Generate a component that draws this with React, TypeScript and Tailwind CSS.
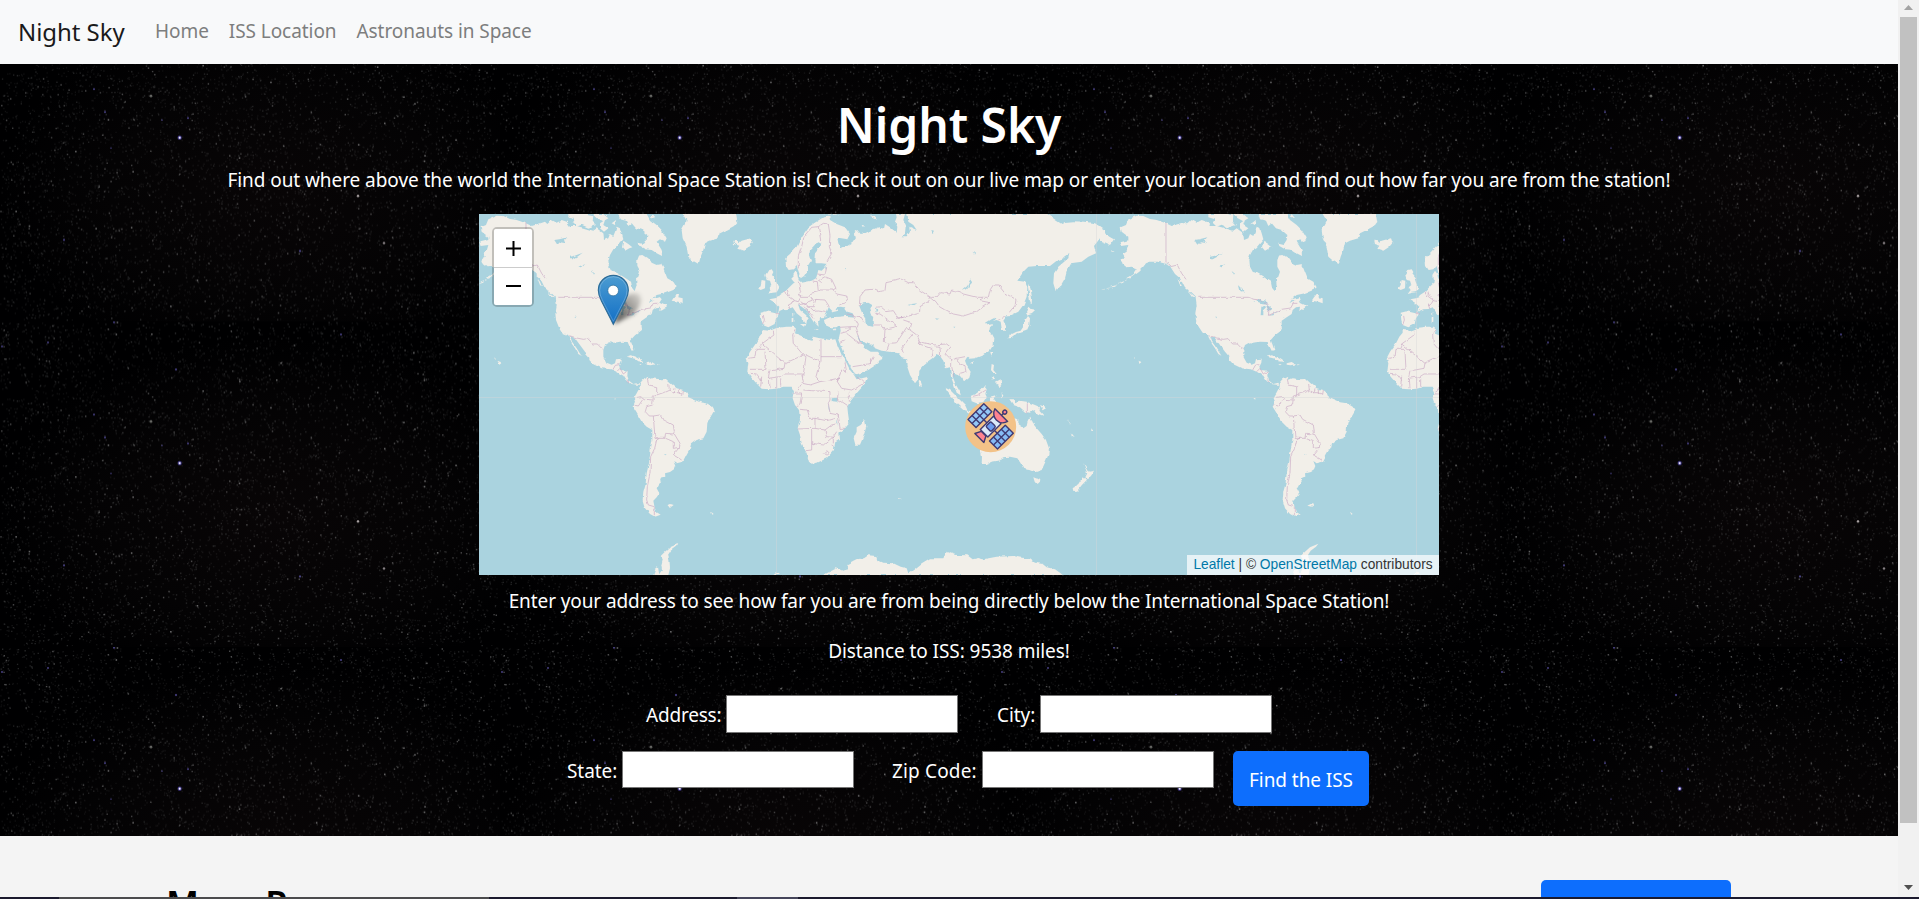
import React from "react";

/* ---------- star field ---------- */
const TILE_W = 500;
const TILE_H = 325.5;

function seeded(seed: number) {
  let a = seed;
  return () => {
    a = (a + 0x6d2b79f5) | 0;
    let t = Math.imul(a ^ (a >>> 15), 1 | a);
    t = (t + Math.imul(t ^ (t >>> 7), 61 | t)) ^ t;
    return ((t ^ (t >>> 14)) >>> 0) / 4294967296;
  };
}

function starPath(seed: number, count: number, size: number) {
  const rnd = seeded(seed);
  let d = "";
  for (let i = 0; i < count; i++) {
    const x = (rnd() * (TILE_W - 2)).toFixed(1);
    const y = (rnd() * (TILE_H - 2)).toFixed(1);
    d += `M${x} ${y}h${size}v${size}h-${size}z`;
  }
  return d;
}

const STAR_LAYERS = [
  { d: starPath(11, 5200, 1.2), fill: "#ffffff", opacity: 0.07 },
  { d: starPath(23, 1500, 1.3), fill: "#e8f0f0", opacity: 0.16 },
  { d: starPath(37, 300, 1.4), fill: "#ffffff", opacity: 0.28 },
  { d: starPath(41, 30, 1.5), fill: "#ffffff", opacity: 0.42 },
];

const BLUE_STARS: [number, number, number][] = [
  [94, 93, 1], [105, 116, 1], [162, 124, 0.8], [188, 122, 1], [111, 152, 0.8], [64, 244, 1],
  [300, 255, 1.1], [114, 0.8, 1], [48, 21, 1], [2, 25, 1], [341, 13, 1.1], [176, 48, 1.1],
];

function StarField() {
  return (
    <svg className="absolute inset-0 h-full w-full" aria-hidden="true">
      <defs>
        <radialGradient id="haze" cx="0.55" cy="0.6" r="0.55">
          <stop offset="0" stopColor="#080506" />
          <stop offset="0.6" stopColor="#040304" />
          <stop offset="1" stopColor="#000001" />
        </radialGradient>
        <pattern id="stars" x="0" y="-68" width={TILE_W} height={TILE_H} patternUnits="userSpaceOnUse">
          <rect width={TILE_W} height={TILE_H} fill="url(#haze)" />
          {STAR_LAYERS.map((l) => (
            <path key={l.opacity} d={l.d} fill={l.fill} opacity={l.opacity} />
          ))}
          {BLUE_STARS.map(([x, y, r], i) => (
            <circle key={i} cx={x} cy={y} r={r} fill="#6c62c8" opacity="0.65" />
          ))}
          <circle cx="179.7" cy="141.7" r="2.1" fill="#5a4fd0" opacity="0.65" />
          <circle cx="179.7" cy="141.7" r="1.1" fill="#f1eeff" />
          <circle cx="358" cy="200" r="1.2" fill="#d8cfd0" opacity="0.8" />
          <circle cx="384" cy="247" r="1.2" fill="#c8c0c4" opacity="0.7" />
          <circle cx="151" cy="100" r="1.3" fill="#a8aaa4" opacity="0.6" />
        </pattern>
      </defs>
      <rect width="100%" height="100%" fill="url(#stars)" />
    </svg>
  );
}

/* ---------- map ---------- */
const WEST_LAND = [
  "M58,97L85,90 85,80 65,65 62,52 78,45 85,28 110,17 130,18 150,27 170,30 198,40 215,48 235,42 255,35 262,42 275,30 290,38 305,30 320,35 330,48 350,48 375,55 400,62 410,55 420,62 430,70 432,90 445,85 450,72 460,78 465,66 470,50 480,55 485,70 490,88 480,100 470,112 460,118 450,135 445,150 447,170 455,185 470,188 490,200 505,210 513,215 517,235 524,243 530,225 528,205 535,200 540,185 532,170 532,150 537,137 550,135 565,145 575,158 590,165 603,163 610,175 616,190 622,205 640,215 650,232 640,240 615,250 590,255 580,263 568,280 580,272 600,262 605,268 598,278 612,285 625,286 605,300 598,303 600,290 588,292 578,300 575,312 560,322 545,332 545,350 546,360 525,376 512,390 518,405 523,420 515,422 508,408 503,396 480,395 462,398 450,397 435,405 430,420 430,440 440,458 455,464 465,460 468,448 485,446 484,458 478,470 482,480 503,482 502,498 507,512 520,522 535,518 538,524 530,524 512,522 500,513 490,497 470,485 452,478 425,475 400,463 388,450 388,440 375,425 360,405 345,385 330,378 336,395 350,415 364,437 355,432 345,415 336,402 328,386 325,375 308,368 296,350 288,330 286,310 290,285 287,262 270,245 255,235 247,218 240,205 225,192 212,172 195,160 175,155 150,155 138,160 130,170 118,182 100,195 84,207 80,204 98,193 110,175 95,170 80,172 68,162 64,150 74,140 68,130 80,122 85,105 62,108Z",
  "M540,520L550,508 565,500 562,510 575,505 600,508 618,507 630,518 650,535 670,540 680,548 685,562 705,570 720,577 740,580 758,590 765,603 755,620 742,635 740,665 730,685 710,690 693,703 690,715 680,732 668,755 650,760 640,753 646,768 642,778 630,786 615,790 616,800 603,803 605,815 597,822 590,835 598,850 590,862 580,872 583,888 588,905 602,914 585,920 570,912 555,895 548,870 550,845 557,820 560,790 567,760 572,720 577,690 577,660 560,650 545,635 530,610 518,590 525,575 521,565 530,550 538,535Z",
  "M325,12L382,12 400,16 398,35 408,45 385,53 365,44 350,50 338,38 345,28 325,22Z",
  "M420,40L435,30 430,45 445,55 432,65 420,55Z M400,12L430,12 445,25 430,34 412,24Z",
  "M475,12L560,12 570,30 590,45 605,60 620,85 615,95 600,88 590,95 605,120 606,138 590,130 575,120 555,118 538,108 535,98 552,102 560,90 562,75 545,60 528,55 515,40 505,48 498,32 480,28Z",
  "M490,92L505,102 517,112 508,115 495,122 486,112Z M455,40L468,30 465,45Z M575,12L585,25 570,20Z",
  "M668,12L680,32 665,60 668,85 680,110 685,140 700,153 716,162 722,140 730,120 735,100 750,92 775,85 780,70 800,60 822,48 832,36 828,12Z",
  "M820,92L832,94 836,100 845,92 862,88 873,85 878,98 868,110 850,122 832,116 838,107 822,102Z",
  "M635,272L642,262 650,252 657,252 655,262 668,265 668,280 655,275Z M575,268L600,262 598,268 580,272Z",
  "M500,440L515,436 530,441 545,450 553,456 535,454 525,446Z M560,460L575,456 586,463 572,466 560,464Z M535,462L545,463 540,466Z M592,463L600,464 592,466Z",
  "M622,887L632,882 641,885 634,890Z M750,905L758,912 754,914Z M460,565L466,564 466,569Z",
  "M596,1095L606,1080 604,1065 608,1048 602,1038 615,1025 630,1012 655,1001 648,1010 632,1022 624,1035 628,1050 630,1075 625,1095Z M580,1095L586,1078 594,1072 598,1095Z",
  "M100,442L105,443 104,446Z M112,452L124,457 118,461Z M0,60L15,72 28,80 40,90 30,105 15,98 0,92Z",
  "M28,232L48,226 46,230Z M55,222L72,214 70,218Z M232,205L240,215 246,230 240,225Z M258,235L270,250 285,262 275,260Z",
];

const WEST_WATER = [
  "M460,276L482,267 498,272 500,281 485,280 474,276Z M484,290L494,286 498,292 490,300 490,315 482,316Z M498,284L510,290 516,298 508,304 502,296Z M505,317L518,312 526,309 520,316Z M524,308L542,300 536,306Z",
  "M283,90L298,88 322,82 312,92 318,100 300,97 292,104Z M330,140L342,138 368,128 352,140 338,148 330,148Z M358,170L376,162 366,172Z M413,222L420,228 424,245 418,243Z M424,230L433,246 428,248Z M395,180L405,188 402,194Z",
  "M345,320L350,320 351,325Z M612,733L620,733 616,736Z",
];

const WEST_BORDERS = [
  "M198,38V157L212,170 232,165 245,190 258,208 M295,262H445L462,268 485,270 500,282 508,300 505,316 525,308 545,298 572,294 580,280 592,280",
  "M328,377L350,384 370,388 384,386 398,402 412,402 428,418 M458,480L466,466 478,464 M470,485L480,475 490,492 503,482 M505,512V520",
  "M562,508L566,525 590,530 590,555 580,558 578,585 M590,555L610,548 628,540 626,522 M628,540L640,548 655,548 668,552 M645,535L642,550 M658,537V552 M670,540L668,554 M528,562L545,560 556,568 578,570 M520,585L535,588 550,566 M578,585L560,590 556,605 568,618 580,618 585,685 598,685 M580,618L600,615 608,628 640,645 643,665 640,672 617,670 615,685 598,685 590,690 584,715 572,740 570,790 562,830 560,870 565,885 583,890 M617,685L640,695 640,715 658,712 660,700 643,672 M658,712L640,735 665,750 M583,892V915",
];

const EAST_LAND = [
  "M92,308L110,304 137,310 145,308 148,290 135,278 118,268 135,265 145,262 150,255 165,245 175,235 188,222 195,216 188,208 187,195 195,182 202,192 205,210 215,218 245,212 258,205 262,192 265,180 275,182 285,172 292,162 275,160 258,160 253,150 255,130 270,112 274,98 262,92 254,105 240,120 238,140 243,152 235,165 230,185 222,198 212,205 205,185 200,165 190,178 176,180 168,168 166,145 182,130 200,110 215,80 235,52 252,40 280,22 298,20 300,30 320,42 345,52 360,72 352,88 330,84 322,84 325,100 335,118 340,108 352,108 368,98 378,84 374,65 382,60 392,72 405,70 425,60 445,52 462,56 465,42 480,52 500,68 502,50 495,35 500,22 498,12 525,12 520,30 530,50 528,68 515,82 530,82 540,65 538,50 560,60 550,45 535,35 532,12 952,12 980,32 995,42 1005,36 1030,34 1062,35 1095,40 1125,60 1132,78 1152,88 1140,102 1128,95 1112,82 1102,95 1092,108 1098,130 1075,140 1055,155 1022,160 1012,178 1005,205 990,230 977,243 970,220 972,190 985,170 1015,145 1018,132 1000,145 980,152 960,168 920,168 895,170 880,185 862,212 885,215 892,232 890,260 880,285 865,305 845,315 832,316 820,332 828,348 828,362 816,362 812,335 800,330 790,332 798,322 785,328 768,338 775,345 790,342 780,352 778,362 790,385 788,405 775,425 760,435 735,445 718,446 712,440 705,452 712,470 722,485 718,500 702,514 696,505 688,496 678,492 668,480 668,500 678,525 690,545 692,556 680,548 670,520 663,500 660,472 648,475 640,452 630,438 620,435 610,445 595,455 580,468 568,482 567,505 555,520 540,495 530,465 528,445 515,442 505,430 480,425 455,422 435,415 430,405 408,400 390,388 380,378 390,395 402,410 410,418 422,425 440,425 458,440 445,460 415,480 375,495 365,475 350,450 335,415 325,390 328,378 332,362 330,348 318,352 300,352 285,345 282,330 300,322 330,320 350,318 372,320 368,310 348,304 345,292 330,290 318,292 325,302 310,306 296,292 292,302 288,315 285,324 268,325 264,335 266,350 256,340 250,330 242,318 235,305 215,290 205,285 210,300 228,315 236,326 228,330 226,342 220,335 218,325 200,310 188,292 175,297 160,298 148,303 145,315 138,325 134,342 115,352 98,345 94,330Z",
  "M98,360L118,362 140,354 170,350 192,350 198,356 195,370 215,378 228,388 242,392 250,380 270,385 300,390 316,388 320,400 335,435 350,460 360,480 372,495 380,508 412,500 402,525 380,550 360,575 352,590 354,610 358,640 345,655 328,668 330,690 315,700 312,720 290,745 265,757 245,761 237,755 230,730 215,700 210,675 203,655 210,630 207,600 195,585 188,565 192,545 185,530 160,530 140,536 120,538 95,536 75,515 62,500 52,485 55,460 50,445 60,425 78,400 88,380 98,368Z",
  "M405,630L409,650 400,680 390,704 376,704 371,685 380,665 380,652 392,645Z",
  "M115,180L125,178 130,186 126,195 134,205 138,218 147,235 140,247 128,248 113,252 122,240 116,232 124,225 120,212 110,210 106,195Z M95,210L106,212 105,235 92,240 85,236 92,225Z",
  "M185,322L190,320 190,335 185,337Z M186,310L190,310 189,318Z M210,342L226,342 222,350Z M255,358L270,358 262,361Z M308,358L318,355 312,362Z M198,205L206,203 204,212Z",
  "M835,385L840,375 858,366 872,362 880,350 886,330 894,318 900,325 898,345 890,362 872,368 858,374 845,384Z M888,306L895,290 905,300 916,302 906,312 894,316Z M896,218L902,235 906,265 905,288 900,275 897,250 894,230Z",
  "M566,512L573,516 576,526 569,531Z M645,533L660,540 685,565 705,585 712,600 700,600 680,582 665,562 652,545Z M704,600L735,606 760,610 755,614 720,610Z",
  "M722,558L740,550 752,540 762,528 770,538 766,552 770,560 760,576 740,580 725,574Z M785,462L792,465 790,480 800,492 792,492 783,480Z M798,515L812,508 814,525 806,532Z M785,500L795,505 790,512Z M780,425L788,428 784,440Z M722,458L732,454 728,462Z",
  "M780,560L800,555 790,565 798,575 786,582 780,575Z M815,550L822,560 816,565Z M838,568L850,568 856,580 870,572 890,575 915,585 930,592 928,602 942,618 925,612 908,600 900,608 885,605 870,592 850,585Z M930,585L948,592 938,598Z",
  "M755,762L756,740 750,715 742,695 748,680 775,665 795,645 815,630 830,635 845,622 862,628 862,642 880,655 890,648 894,630 901,620 908,640 920,655 935,672 948,690 957,715 955,735 945,758 935,780 915,787 898,780 882,778 872,760 862,745 840,740 820,742 805,752 785,755 770,762Z",
  "M910,802L922,806 931,802 930,812 920,822 914,815Z M1060,760L1066,768 1076,785 1092,782 1085,795 1074,808 1066,802 1072,790Z M1058,802L1068,812 1055,826 1042,842 1030,843 1028,835 1045,822Z M1022,670L1034,684 1026,680Z M1084,652L1090,660 1084,662Z M1010,630L1022,645 1016,640Z",
  "M280,1095L320,1075 338,1082 355,1078 352,1065 370,1055 385,1048 402,1045 415,1036 438,1038 442,1050 460,1058 490,1060 512,1070 530,1075 535,1090 550,1080 575,1060 600,1045 640,1045 650,1025 680,1035 712,1036 728,1048 745,1044 760,1048 800,1040 850,1038 900,1048 915,1058 938,1062 950,1072 975,1078 992,1090 998,1095Z M130,1095L140,1088 150,1095Z",
  "M505,864L515,867 508,870Z M398,45L405,46 402,52Z M420,20L440,30 435,18Z M1142,120L1155,122 1150,125Z M275,12L330,12 310,14Z",
];

const EAST_WATER = [
  "M388,288L400,280 415,278 428,286 418,298 422,312 430,318 428,335 430,350 418,348 408,342 405,325 396,308Z",
  "M532,285L545,282 562,280 548,288Z M438,290L445,300 440,308Z M615,325L628,326 622,331Z M722,205L726,218 708,238 695,242 712,228Z M308,565L322,563 322,575 308,574Z M295,580L299,600 302,606 296,598Z M320,625L325,640 324,650Z M285,172L290,172 288,180Z M342,175L348,178 344,182Z M670,350L676,350 673,354Z M728,125L735,128 732,134Z M604,60L612,62 608,70Z",
];

const EAST_BORDERS = [
  "M100,312L103,330 98,345 M137,310L150,312 M165,245L175,260 190,270 185,280 175,285 180,297 M172,240L178,258 M205,215L212,245 205,255 215,262 235,262 245,250 265,245 262,215 248,213 M190,272L205,275 212,262 M212,275L225,285 235,275 255,268 240,262 M205,285L225,280 235,290 250,290 258,268 M222,290L245,315 252,325 M235,290L248,302 262,300 290,305 M255,268L285,270 295,285 298,292 M265,245L270,240 308,240 320,252 350,258 352,270 340,280 325,285 M268,210L285,200 305,208 318,235 308,240 M262,192L285,195 290,172 M258,205L275,218",
  "M205,175L205,140 215,110 222,80 245,52 265,50 272,90 M265,50L280,40 295,42 300,75 298,110 305,130 290,155",
  "M388,288L390,260 405,240 430,238 445,245 465,242 468,218 515,208 535,218 550,218 568,240 602,262 595,275 570,290 568,310 520,322 495,325 M605,262L620,262 632,248 660,252 665,240 690,245 700,252 740,262 760,262 750,272 780,278 760,290 740,305 700,318 670,312 645,300 628,290 618,275 602,262 M760,262L775,262 780,240 790,225 805,225 825,250 858,268 855,290 840,308 M805,330L825,318 M438,292L452,290 470,305 490,302 505,325 520,322 M436,310L450,312 475,330 500,350 465,358 455,345 430,345 M465,358L463,395 478,400 470,422 M478,400L500,398 515,375 530,352 540,360 M520,330L545,338 540,360 560,375 570,395 610,405 650,402 660,410 645,430 M520,430L515,415 530,395 545,375 M570,395L568,402 605,415 608,440 M612,410L630,412 632,440 M645,430L665,450 680,445 705,440 M665,450L665,470 672,500 M680,445L690,465 705,470 708,485 690,490 M372,322L385,342 382,352 M350,312L390,320 400,335 M330,352L362,350 M362,350L375,350 385,380 392,402 M332,370L350,365 362,350 M350,370L375,390 390,400 M330,400L345,390 M368,470L400,465 420,460 422,445 M420,460L430,440",
  "M130,362L132,375 95,402 90,415 M95,402L165,460 220,435 190,400 188,375 195,358 M105,425L108,478 60,478 M165,460L162,475 125,482 M55,445L75,442 78,418 105,418 M220,435L228,440 222,480 218,500 M228,435L270,455 M273,388V455 M273,440H335 M270,455L258,500 270,515 300,510 325,505 322,515 M162,492L215,492 220,515 205,540 195,548 M120,482L115,505 150,500 162,492 M95,500L92,530 M118,505L120,535 M140,502V535 M152,505V530 M60,490L80,492 95,512 M322,515L335,535 365,540 M345,455L350,490 335,480 322,515 M365,540L402,520 380,500 M218,520L240,525 270,515 M220,540L245,542 300,545 300,570 295,580 300,610 325,615 M325,545L322,568 355,590 M358,545V575 M190,552H215L210,585 200,590 M210,598L232,600 240,625 255,625 255,655 203,657 M255,625L290,632 315,625 M255,655L285,660 305,645 325,640 M245,660V720L228,722 M245,700L280,705 310,680 320,665 M285,660L290,680 310,682 310,700 M325,612L330,655 345,655",
  "M283,730L290,722 297,728 290,735Z M725,560L745,555 768,540 M892,577V610 M305,705L312,710",
];

function MapCanvas() {
  return (
    <svg className="absolute inset-0" width="960" height="361" viewBox="0 0 960 361" aria-hidden="true">
      <defs>
        <filter id="coast" x="-5%" y="-5%" width="110%" height="110%">
          <feTurbulence type="fractalNoise" baseFrequency="0.16" numOctaves="2" seed="4" />
          <feDisplacementMap in="SourceGraphic" scale="3.4" xChannelSelector="R" yChannelSelector="G" />
        </filter>
        <linearGradient id="pin" x1="0" y1="0" x2="0" y2="1">
          <stop offset="0" stopColor="#4c9cd1" />
          <stop offset="1" stopColor="#126fc6" />
        </linearGradient>
        <linearGradient id="shade" x1="0" y1="1" x2="1" y2="0">
          <stop offset="0" stopColor="#000" stopOpacity="0.7" />
          <stop offset="1" stopColor="#000" stopOpacity="0.1" />
        </linearGradient>
        <filter id="soft" x="-50%" y="-50%" width="200%" height="200%">
          <feGaussianBlur stdDeviation="7" />
        </filter>
        <g id="west">
          {WEST_LAND.map((d, i) => <path key={i} d={d} fill="#f2efe9" />)}
          {WEST_WATER.map((d, i) => <path key={i} d={d} fill="#aad3df" />)}
          <g fill="none" stroke="#c9a9c4" strokeOpacity="0.65" strokeWidth="3" strokeLinejoin="round">
            {WEST_BORDERS.map((d, i) => <path key={i} d={d} />)}
          </g>
          <path d="M5,240Q50,230 90,203" fill="none" stroke="#f2efe9" strokeWidth="2" strokeOpacity="0.7" strokeDasharray="10 5" />
        </g>
        <g id="east">
          {EAST_LAND.map((d, i) => <path key={i} d={d} fill="#f2efe9" />)}
          {EAST_WATER.map((d, i) => <path key={i} d={d} fill="#aad3df" />)}
          <g fill="none" stroke="#c9a9c4" strokeOpacity="0.65" strokeWidth="3" strokeLinejoin="round">
            {EAST_BORDERS.map((d, i) => <path key={i} d={d} />)}
          </g>
        </g>
      </defs>
      <rect width="960" height="361" fill="#aad3df" />
      <g filter="url(#coast)">
        <use href="#west" transform="translate(-19 -4) scale(0.33333)" />
        <use href="#east" transform="translate(251 -4) scale(0.33333)" />
        <use href="#west" transform="translate(621 -4) scale(0.33333)" />
        <use href="#east" transform="translate(891 -4) scale(0.33333)" />
      </g>
      <path d="M0,183.5H960M297.5,0V361M617.5,0V361M937.5,0V361" stroke="#d8d8d8" strokeOpacity="0.4" />

      {/* location pin */}
      <g transform="translate(-1 -4) scale(0.33333)">
        <path d="M408,342L428,280Q450,242 482,252Q500,272 468,312Z" fill="url(#shade)" filter="url(#soft)" />
        <path d="M406,343L370,272Q361,256 361,241A45,45 0 0 1 451,241Q451,256 442,272Z" fill="url(#pin)" stroke="#2e6c97" strokeWidth="3.5" />
        <path d="M406,334L373,270Q365,255 365,241A41,41 0 0 1 447,241Q447,255 439,270Z" fill="none" stroke="#fff" strokeOpacity="0.22" strokeWidth="3" />
        <circle cx="405.5" cy="241.5" r="16" fill="#fff" stroke="#2e6c97" strokeWidth="2" />
      </g>

      {/* station marker */}
      <g transform="translate(251 -4) scale(0.33333)">
        <circle cx="782" cy="650" r="76.5" fill="#f3c288" />
        <g transform="translate(782 650) rotate(-45)" stroke="#3f3a73" strokeWidth="4.2" strokeLinejoin="round">
          <path d="M0,-30V30" />
          <rect x="-33" y="-63" width="67" height="34" fill="#93c8f8" />
          <path d="M-16,-63V-29M0,-63V-29M17,-63V-29M-33,-46H34" />
          <rect x="-33" y="28" width="67" height="34" fill="#86bbf6" />
          <path d="M-16,28V62M0,28V62M17,28V62M-33,45H34" />
          <path d="M-30,-10V10L-48,19V-19Z" fill="#ff8290" />
          <rect x="-28" y="-16" width="56" height="32" fill="#dbe9fa" />
          <rect x="-10" y="-11" width="21" height="22" rx="5" fill="#6d9df0" />
          <path d="M47,-29V25C33,21 26,9 26,-2C26,-13 34,-25 47,-29Z" fill="#ff8290" />
          <path d="M47,-1H56" />
          <circle cx="61" cy="-1" r="6" fill="#ff8290" />
        </g>
      </g>
    </svg>
  );
}

function IssMap() {
  return (
    <div className="relative ml-[479px] mt-[19px] h-[361px] w-[960px] overflow-hidden bg-[#aad3df]">
      <MapCanvas />
      <div className="absolute left-[13px] top-[13px] rounded-[5px] border-[2.5px] border-black/20 bg-clip-padding">
        <button aria-label="Zoom in" className="flex h-[39px] w-[38px] items-center justify-center rounded-t-[2px] border-b border-[#ccc] bg-white">
          <svg width="17" height="17" viewBox="0 0 17 17"><path d="M1 8.5H16M8.5 1V16" stroke="#000" strokeWidth="2" /></svg>
        </button>
        <button aria-label="Zoom out" className="flex h-[37px] w-[38px] items-center justify-center rounded-b-[2px] bg-white">
          <svg width="17" height="17" viewBox="0 0 17 17"><path d="M1 8H16" stroke="#000" strokeWidth="2" /></svg>
        </button>
      </div>
      <div className="absolute bottom-0 right-0 flex h-[20px] w-[252px] items-center justify-center whitespace-pre bg-white/70 font-['Liberation_Sans',Arial,sans-serif] text-[13.75px] leading-[20px] tracking-normal text-[#333]">
        <a className="text-[#0078a8]">Leaflet</a> | © <a className="text-[#0078a8]">OpenStreetMap</a> contributors
      </div>
    </div>
  );
}

/* ---------- page ---------- */
function Field({ label, labelClass, inputClass }: { label: string; labelClass: string; inputClass: string }) {
  return (
    <label className="flex">
      <span className={`pt-[5px] whitespace-nowrap ${labelClass}`}>{label}</span>
      <input type="text" className={`w-[232px] border border-[#767676] bg-white ${inputClass}`} />
    </label>
  );
}

export default function App() {
  return (
    <div className="flex h-[899px] w-[1919px] flex-col overflow-hidden bg-[#f4f4f4] font-['Noto_Sans','Open_Sans',sans-serif] text-[19px] leading-[30px] tracking-[-0.065px]">
      <div className="flex h-[897px] overflow-hidden">
        <div className="flex w-[1898px] shrink-0 flex-col">
          <nav className="flex h-[64px] shrink-0 items-start bg-[#f8f9fa] pl-[18px] pt-[14px]">
            <a className="w-[137px] text-[24px] leading-[36px] text-[#1a1a1a]">Night Sky</a>
            <div className="flex gap-[20px] pt-[2px] text-[#7d7e7e]">
              <a>Home</a>
              <a>ISS Location</a>
              <a>Astronauts in Space</a>
            </div>
          </nav>

          <main className="relative h-[772px] shrink-0 bg-black text-white">
            <StarField />
            <div className="relative pt-[31px]">
              <h1 className="text-center text-[48px] font-semibold leading-[60px]">Night Sky</h1>
              <p className="mt-[10px] text-center">
                Find out where above the world the International Space Station is! Check it out on our live map or enter your location and find out how far you are from the station!
              </p>
              <IssMap />
              <p className="mt-[11px] text-center tracking-[-0.1px]">
                Enter your address to see how far you are from being directly below the International Space Station!
              </p>
              <p className="mt-[20px] text-center">Distance to ISS: 9538 miles!</p>
              <form className="mt-[29px]">
                <div className="flex gap-[39px] pl-[646px]">
                  <Field label="Address:" labelClass="w-[80px] tracking-[-0.2px]" inputClass="h-[38px]" />
                  <Field label="City:" labelClass="w-[43px]" inputClass="h-[38px]" />
                </div>
                <div className="mt-[18px] flex items-start pl-[567px]">
                  <Field label="State:" labelClass="w-[55px]" inputClass="h-[37px]" />
                  <div className="ml-[38px]">
                    <Field label="Zip Code:" labelClass="w-[90px] tracking-[0.15px]" inputClass="h-[37px]" />
                  </div>
                  <button type="button" className="ml-[19px] h-[55px] w-[136px] rounded-[5px] bg-[#0d6efd] pt-[3px] text-white">
                    Find the ISS
                  </button>
                </div>
              </form>
            </div>
          </main>

          <section className="flex items-start justify-between pl-[166px] pr-[167px] pt-[44px]">
            <h2 className="pt-[4px] text-[35.5px] font-semibold leading-[38px] text-black">More Resources</h2>
            <div className="h-[55px] w-[190px] rounded-[5px] bg-[#0d6efd]" />
          </section>
        </div>

        <div className="flex w-[21px] shrink-0 flex-col items-center bg-[#f1f1f1]">
          <svg className="shrink-0" width="17" height="17" viewBox="0 0 17 17"><path d="M4 10L8.5 5L13 10Z" fill="#a3a3a3" /></svg>
          <div className="h-[806px] w-[17px] bg-[#c1c1c1]" />
          <svg className="mt-[56px] shrink-0" width="17" height="17" viewBox="0 0 17 17"><path d="M4 6L8.5 11L13 6Z" fill="#505050" /></svg>
        </div>
      </div>

      <div className="flex h-[2px] shrink-0 bg-[#1b1a2e]">
        <div className="ml-[59px] h-full w-[430px] bg-[#4b4b4d]" />
        <div className="ml-[248px] h-full w-[61px] bg-[#45455a]" />
      </div>
    </div>
  );
}
